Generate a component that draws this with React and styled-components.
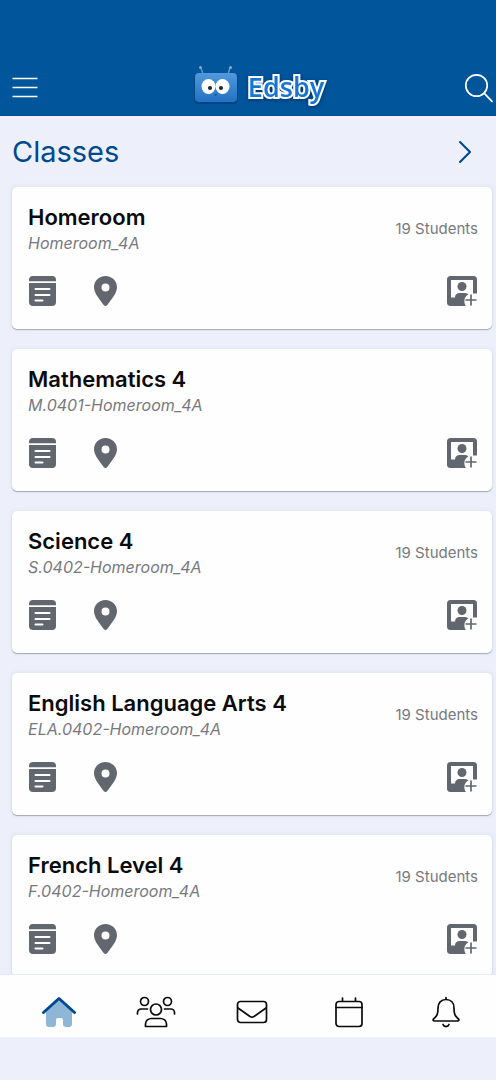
import React from "react";
import styled, { createGlobalStyle } from "styled-components";

const GlobalStyle = createGlobalStyle`
  *, *::before, *::after { box-sizing: border-box; }
  body { margin: 0; background: #edf0fb; font-family: Inter, "Liberation Sans", sans-serif; }
  h1, h2, p, ul { margin: 0; padding: 0; }
  ul { list-style: none; }
`;

const Screen = styled.div`
  display: flex;
  flex-direction: column;
  height: 100vh;
  background: #edf0fb;
`;

const Header = styled.header`
  display: grid;
  grid-template-columns: 1fr auto 1fr;
  align-items: center;
  flex: none;
  padding: 60px 2px 0 10px;
  height: 116px;
  background: #00559b;
  border-bottom: 1px solid #004a8c;
`;

const IconButton = styled.button`
  display: flex;
  justify-self: ${(p) => p.$side || "auto"};
  padding: 0;
  border: 0;
  background: none;
  color: ${(p) => p.$color || "#62666f"};
  cursor: pointer;

  svg { display: block; }
`;

const Brand = styled.a`
  display: flex;
  align-items: center;
  gap: 10px;
  margin: 0 0 6px 14px;
  color: #1677d2;
  text-decoration: none;
`;

const BrandName = styled.span`
  padding-top: 4px;
  font: 600 27px/36px "Open Sans", sans-serif;
  -webkit-text-stroke: 4px #fff;
  paint-order: stroke fill;
  filter: drop-shadow(0 1px 2px #00326a);
`;

const Main = styled.main`
  flex: 1;
  min-height: 0;
  overflow: hidden;
  padding: 0 4px 0 12px;
`;

const TitleRow = styled.div`
  display: flex;
  align-items: center;
  justify-content: space-between;
  height: 71px;
  padding-right: 20px;
`;

const Title = styled.h1`
  color: #00498f;
  font-size: 29px;
  line-height: 40px;
  font-weight: 400;
`;

const CardList = styled.ul`
  display: flex;
  flex-direction: column;
  gap: 20px;
`;

const Card = styled.li`
  display: flex;
  flex-direction: column;
  justify-content: space-between;
  height: 142px;
  padding: 16px 14px 22px 16px;
  border-radius: 5px;
  background: #fefefe;
  box-shadow: 0 1px 1px #a5a8b0, 0 0 5px #d9ddec;
`;

const CardTop = styled.div`
  display: flex;
  align-items: center;
  justify-content: space-between;
`;

const ClassName = styled.h2`
  color: #0b0b0d;
  font-size: 22px;
  line-height: 28px;
  font-weight: 600;
`;

const Code = styled.p`
  color: #77797f;
  font-size: 16px;
  line-height: 24px;
  font-style: italic;
`;

const Count = styled.span`
  color: #77797f;
  font-size: 15px;
  line-height: 24px;
`;

const Actions = styled.div`
  display: flex;
  align-items: center;
  gap: 32px;
`;

const Spacer = styled.span`
  flex: 1;
`;

const Nav = styled.nav`
  display: grid;
  grid-template-columns: repeat(5, 1fr);
  flex: none;
  height: 63px;
  padding: 12px 2px 0 11px;
  margin-bottom: 43px;
  background: #fefefe;
  border-top: 1px solid #e3e9f7;
`;

const NavLink = styled.a`
  display: flex;
  align-items: center;
  justify-content: center;
  color: #0b0b0d;
`;

const MenuIcon = () => (
  <svg width="30" height="30" viewBox="0 0 30 30" stroke="currentColor" strokeWidth="1.7">
    <path d="M2.5 5.5h25M2.5 14.5h25M2.5 23.5h25" />
  </svg>
);

const SearchIcon = () => (
  <svg width="30" height="30" viewBox="0 0 30 30" fill="none" stroke="currentColor" strokeWidth="1.7" strokeLinecap="round">
    <circle cx="12.5" cy="12.5" r="10.7" />
    <path d="M20.3 20.3l7.7 8" />
  </svg>
);

const ChevronIcon = () => (
  <svg width="14" height="24" viewBox="0 0 14 24" fill="none" stroke="currentColor" strokeWidth="2.1" strokeLinecap="round" strokeLinejoin="round">
    <path d="M2 2l10 10L2 22" />
  </svg>
);

const RobotLogo = () => (
  <svg width="44" height="40" viewBox="0 0 44 40">
    <defs>
      <linearGradient id="robotFace" x1="0" y1="0" x2="0" y2="1">
        <stop offset="0" stopColor="#5299de" />
        <stop offset="1" stopColor="#2271c2" />
      </linearGradient>
    </defs>
    <g stroke="#6b9dc4" strokeWidth="1.3" fill="none">
      <path d="M9 9L7 3M34 9l2-6" />
    </g>
    <circle cx="6.5" cy="2.5" r="1.5" fill="#82abc9" />
    <circle cx="36.5" cy="2.5" r="1.5" fill="#82abc9" />
    <rect x="0" y="9" width="44" height="30" rx="4" fill="#004783" />
    <rect x="1" y="8" width="42" height="29" rx="4" fill="url(#robotFace)" />
    <ellipse cx="14.5" cy="21.5" rx="7" ry="7.5" fill="#fff" />
    <ellipse cx="28.5" cy="21.5" rx="7" ry="7.5" fill="#fff" />
    <circle cx="16" cy="23" r="2.1" fill="#29252a" />
    <circle cx="27" cy="23" r="2.1" fill="#29252a" />
    <path d="M20 29.2h3.4l-1.7 1.5z" fill="#174375" />
  </svg>
);

const NotesIcon = () => (
  <svg width="31" height="32" viewBox="0 0 31 32" fill="currentColor">
    <path d="M1 6.2V5a4 4 0 014-4h19a4 4 0 014 4v1.2z" />
    <path d="M1 8h27v19a4 4 0 01-4 4H5a4 4 0 01-4-4z" />
    <path d="M7.5 14h14M7.5 20h14M7.5 25.5h7" stroke="#fefefe" strokeWidth="2" strokeLinecap="round" />
  </svg>
);

const PinIcon = () => (
  <svg width="31" height="32" viewBox="0 0 31 32" fill="currentColor">
    <path fillRule="evenodd" d="M14.5 1C8 1 3 6 3 12.2c0 6.2 5.8 12.2 9.7 17.8q1.8 2 3.6 0C20.2 24.4 26 18.4 26 12.2 26 6 21 1 14.5 1zm0 7.5a4 4 0 100 8 4 4 0 000-8z" />
  </svg>
);

const AddPersonIcon = () => (
  <svg width="32" height="32" viewBox="0 0 32 32">
    <rect x="1" y="1" width="30" height="30" rx="3.5" fill="currentColor" />
    <rect x="5" y="5" width="22" height="22" fill="#fefefe" />
    <circle cx="16" cy="11.5" r="4.5" fill="currentColor" />
    <path d="M5 28v-5.5h4c0-3 2-4.500 4.500-4.500h5.500c2 0 3.500 1 4 2.500L20 28z" fill="currentColor" />
    <path d="M32 18.500V32H20.500c-2-2.500-2.700-5.500-1.700-8.500 1-3 3.700-5 7.200-5z" fill="#fefefe" />
    <path d="M25 19.500v11M19.500 25h11" stroke="currentColor" strokeWidth="1.700" />
  </svg>
);

const HomeIcon = () => (
  <svg width="36" height="34" viewBox="0 0 36 34">
    <path d="M5 17L18 5l13 12v12a3 3 0 01-3 3h-3a3 3 0 01-3-3v-4a2 2 0 00-2-2h-3a2 2 0 00-2 2v4a3 3 0 01-3 3H8a3 3 0 01-3-3z" fill="#8db6d7" />
    <path d="M2.500 17.500L18 3.500l15.500 14" fill="none" stroke="#00498f" strokeWidth="3" strokeLinecap="round" strokeLinejoin="round" />
  </svg>
);

const lineProps = { fill: "none", stroke: "currentColor", strokeWidth: 1.7, strokeLinecap: "round", strokeLinejoin: "round" };

const PeopleIcon = () => (
  <svg width="40" height="34" viewBox="0 0 40 34" {...lineProps}>
    <circle cx="8.500" cy="6.500" r="4" />
    <circle cx="31.500" cy="6.500" r="4" />
    <circle cx="20" cy="14.500" r="5.500" />
    <path d="M1.500 19v-1.500a3.500 3.500 0 013.500-3.500h6.500M38.500 19v-1.500a3.500 3.500 0 00-3.500-3.500h-6.500" />
    <path d="M9.500 31.500V29c0-3.500 3-5.500 6-5.500h9c3 0 6 2 6 5.500v2.500z" />
  </svg>
);

const MailIcon = () => (
  <svg width="32" height="34" viewBox="0 0 32 34" {...lineProps}>
    <rect x="1.500" y="6.500" width="29" height="21" rx="3" />
    <path d="M2 13l12 8.500q2 1.300 4 0L30 13" />
  </svg>
);

const CalendarIcon = () => (
  <svg width="30" height="34" viewBox="0 0 30 34" {...lineProps}>
    <rect x="2" y="6.500" width="26" height="25" rx="3" />
    <path d="M2 12.500h26M8.500 3v3M21.500 3v3" />
  </svg>
);

const BellIcon = () => (
  <svg width="30" height="34" viewBox="0 0 30 34" {...lineProps}>
    <path d="M15 2.500v2M15 4.500c-5 0-8 3.500-8 8.500 0 6-1 8-4 10.500-1.500 1.300-1 2.500.5 2.500h23c1.500 0 2-1.200.5-2.500-3-2.500-4-4.500-4-10.500 0-5-3-8.500-8-8.500z" />
    <path d="M12 29.500c1 2.700 5 2.700 6 0" />
  </svg>
);

const classes = [
  { name: "Homeroom", code: "Homeroom_4A", count: "19 Students" },
  { name: "Mathematics 4", code: "M.0401-Homeroom_4A" },
  { name: "Science 4", code: "S.0402-Homeroom_4A", count: "19 Students" },
  { name: "English Language Arts 4", code: "ELA.0402-Homeroom_4A", count: "19 Students" },
  { name: "French Level 4", code: "F.0402-Homeroom_4A", count: "19 Students" },
];

const tabs = [
  { label: "Home", Icon: HomeIcon },
  { label: "People", Icon: PeopleIcon },
  { label: "Messages", Icon: MailIcon },
  { label: "Calendar", Icon: CalendarIcon },
  { label: "Notifications", Icon: BellIcon },
];

function ClassCard({ name, code, count }) {
  return (
    <Card>
      <CardTop>
        <div>
          <ClassName>{name}</ClassName>
          <Code>{code}</Code>
        </div>
        {count && <Count>{count}</Count>}
      </CardTop>
      <Actions>
        <IconButton aria-label={`${name} notes`}><NotesIcon /></IconButton>
        <IconButton aria-label={`${name} location`}><PinIcon /></IconButton>
        <Spacer />
        <IconButton aria-label={`Add student to ${name}`}><AddPersonIcon /></IconButton>
      </Actions>
    </Card>
  );
}

export default function App() {
  return (
    <>
      <GlobalStyle />
      <Screen>
        <Header>
          <IconButton $side="start" $color="#fff" aria-label="Menu"><MenuIcon /></IconButton>
          <Brand href="#home">
            <RobotLogo />
            <BrandName>Edsby</BrandName>
          </Brand>
          <IconButton $side="end" $color="#fff" aria-label="Search"><SearchIcon /></IconButton>
        </Header>
        <Main>
          <TitleRow>
            <Title>Classes</Title>
            <IconButton $color="#00498f" aria-label="All classes"><ChevronIcon /></IconButton>
          </TitleRow>
          <CardList>
            {classes.map((item) => <ClassCard key={item.name} {...item} />)}
          </CardList>
        </Main>
        <Nav>
          {tabs.map(({ label, Icon }) => (
            <NavLink key={label} href={`#${label.toLowerCase()}`} aria-label={label}><Icon /></NavLink>
          ))}
        </Nav>
      </Screen>
    </>
  );
}
